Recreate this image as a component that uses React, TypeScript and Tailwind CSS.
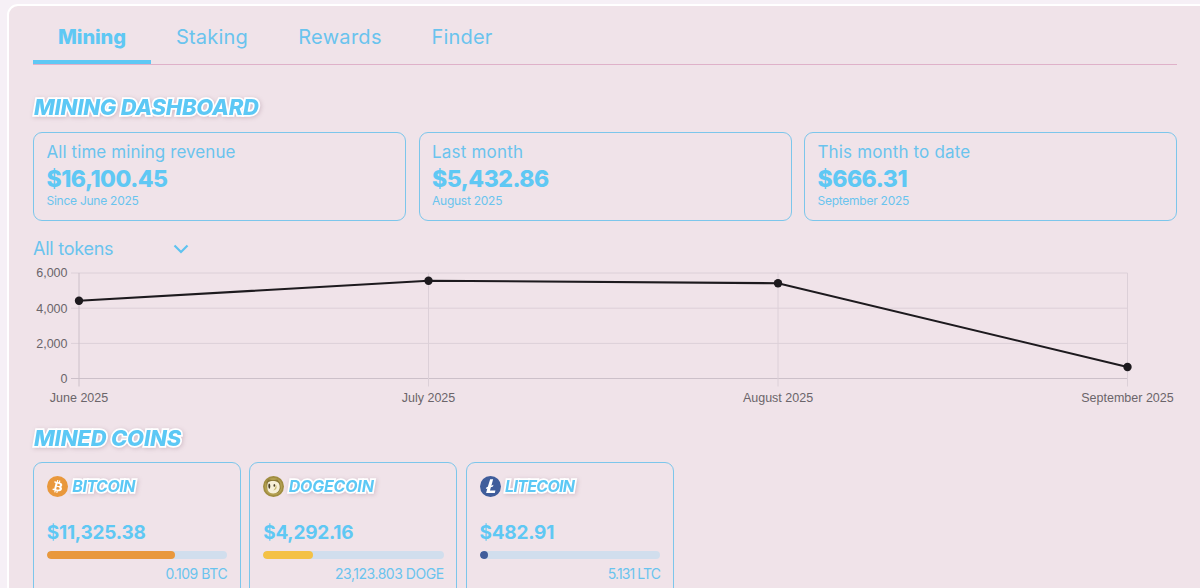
import React from "react";

const TABS = [
  { label: "Mining", active: true, box: "w-[118px]", text: "font-extrabold tracking-[-0.100px]" },
  { label: "Staking", active: false, box: "w-[122px]", text: "tracking-[0.2px]" },
  { label: "Rewards", active: false, box: "w-[134px]", text: "tracking-[0.3px]" },
  { label: "Finder", active: false, box: "w-[110px]", text: "tracking-[0.2px]" },
];

const STATS = [
  { title: "All time mining revenue", value: "$16,100.45", note: "Since June 2025", titleText: "tracking-[0.080px]" },
  { title: "Last month", value: "$5,432.86", note: "August 2025", titleText: "tracking-[0.200px]" },
  { title: "This month to date", value: "$666.31", note: "September 2025", titleText: "tracking-[0.150px]" },
];

const POINTS = [
  { label: "June 2025", x: 79, y: 300.8 },
  { label: "July 2025", x: 428.5, y: 280.7 },
  { label: "August 2025", x: 778, y: 283.2 },
  { label: "September 2025", x: 1127.5, y: 367 },
];

const GRID = [
  { label: "6,000", y: 273 },
  { label: "4,000", y: 308.2 },
  { label: "2,000", y: 343.4 },
  { label: "0", y: 378.5 },
];

function BitcoinIcon() {
  return (
    <svg viewBox="0 0 32 32" className="size-[21px]">
      <circle cx="16" cy="16" r="16" fill="#e9983c" />
      <path
        fill="#fff"
        d="M23.189 14.02c.314-2.096-1.283-3.223-3.465-3.975l.708-2.84-1.728-.43-.69 2.765c-.454-.114-.92-.22-1.385-.326l.695-2.783L15.596 6l-.708 2.839c-.376-.086-.746-.17-1.104-.26l.002-.009-2.384-.595-.46 1.846s1.283.294 1.256.312c.7.175.826.638.805 1.006l-.806 3.235c.048.012.11.03.18.057l-.183-.045-1.13 4.532c-.086.212-.303.531-.793.41.018.025-1.256-.313-1.256-.313l-.858 1.978 2.25.561c.418.105.828.215 1.231.318l-.715 2.872 1.727.43.708-2.84c.472.127.93.245 1.378.357l-.706 2.828 1.728.43.715-2.866c2.948.558 5.164.333 6.097-2.333.752-2.146-.037-3.385-1.588-4.192 1.13-.26 1.98-1.003 2.207-2.538zm-3.95 5.538c-.533 2.147-4.148.986-5.32.695l.95-3.805c1.172.293 4.929.872 4.37 3.11zm.535-5.569c-.487 1.953-3.495.96-4.47.717l.86-3.45c.975.243 4.118.696 3.61 2.733z"
      />
    </svg>
  );
}

function DogecoinIcon() {
  return (
    <svg viewBox="0 0 32 32" className="size-[21px]">
      <circle cx="16" cy="16" r="16" fill="#a08d40" />
      <circle cx="16" cy="16" r="13.500" fill="#b3a050" />
      <path fill="#8b7a38" d="M5 9 8 5l7 1.500 7-1 4 5 1 9-4 6H10l-4-7z" />
      <path fill="#f6f0d8" d="M8 9.500c3-2 7-2.300 11-1.500 4.500.8 6.700 4.500 6.500 9-.2 5.500-4 9.500-10 9.500S6.500 22.500 6.500 17c0-3 .2-5.500 1.500-7.500z" />
      <path fill="#4a4028" d="M9.300 11.500c2.200 0 2.600 7.500.4 8-1.900-.5-2.200-7.500-.4-8zM17.200 12c2 .6 1.900 4 0 4.500-1.600-.5-1.700-3.900 0-4.500z" />
      <path fill="#c8b86e" d="M18 18.500c1.500-1.500 1.500-4 .8-5.500 2 1.500 2.500 4 1.500 6-.8 1.700-2.500 2.700-5 2.700 1.400-.8 2.200-1.600 2.700-3.200z" />
    </svg>
  );
}

function LitecoinIcon() {
  return (
    <svg viewBox="0 0 32 32" className="size-[21px]">
      <circle cx="16" cy="16" r="16" fill="#3f5d9b" />
      <path
        fill="#fff"
        d="m15.500 5h4.500l-2.700 9.800 3.200-1.300-.7 2.400-3.200 1.300-1.400 5h8.300l-1 3.800H9.300l1.900-7.100-2.300.9.7-2.400 2.300-.9z"
      />
    </svg>
  );
}

const COINS = [
  { name: "BITCOIN", Icon: BitcoinIcon, value: "$11,325.38", amount: "0.109 BTC", fill: "bg-[#e9983c]", percent: 71.2, nameText: "tracking-[-0.500px]", amountText: "tracking-[-0.450px]" },
  { name: "DOGECOIN", Icon: DogecoinIcon, value: "$4,292.16", amount: "23,123.803 DOGE", fill: "bg-[#f4c145]", percent: 27.6, nameText: "tracking-[-0.200px]", amountText: "tracking-[-0.480px]" },
  { name: "LITECOIN", Icon: LitecoinIcon, value: "$482.91", amount: "5.131 LTC", fill: "bg-[#3f5d9b]", percent: 4.4, nameText: "tracking-[-0.700px]", amountText: "tracking-[-0.900px]" },
];

const OUTLINED =
  "italic text-[#5cc8f5] [paint-order:stroke_fill] [-webkit-text-stroke:3.500px_white] [filter:drop-shadow(1px_1px_2px_rgba(90,40,70,0.2))]";

function RevenueChart() {
  return (
    <svg viewBox="25 264 1160 146" className="-ml-2 block h-[146px] w-[1160px] shrink-0 font-['Liberation_Sans',sans-serif] text-[12.500px]">
      {GRID.map((g, i) => (
        <g key={g.label}>
          <line x1="71" x2="1127.5" y1={g.y} y2={g.y} stroke={i === 3 ? "#ccc0c9" : "#dcd0d8"} />
          <text x="67.500" y={g.y + 4.300} textAnchor="end" fill="#6b656a">{g.label}</text>
        </g>
      ))}
      {POINTS.map((p, i) => (
        <g key={p.label}>
          <line x1={p.x} x2={p.x} y1="273" y2="386.500" stroke={i === 0 ? "#ccc0c9" : "#dcd0d8"} />
          <text x={p.x} y="401.500" textAnchor="middle" fill="#6b656a">{p.label}</text>
        </g>
      ))}
      <polyline points={POINTS.map((p) => `${p.x},${p.y}`).join(" ")} fill="none" stroke="#1d1a1e" strokeWidth="2.100" />
      {POINTS.map((p) => (
        <circle key={p.label} cx={p.x} cy={p.y} r="4.200" fill="#1d1a1e" />
      ))}
    </svg>
  );
}

export default function App() {
  return (
    <div className="h-[588px] w-full overflow-hidden bg-[#f6f0f6] pt-1 pl-[7px] font-['Inter',sans-serif] text-[#6ac3ee]">
      <main className="h-[620px] w-[1220px] rounded-[11px] border-2 border-white bg-[#f0e3e9] pl-6">
        <div className="flex w-[1144px] flex-col">
          <nav className="flex h-[59px] border-b border-[#dfb1c9]">
            {TABS.map((t) => (
              <button
                key={t.label}
                className={`h-[58px] shrink-0 pt-2 text-[20px] leading-none ${t.box} ${t.active ? "border-b-4 border-[#5fc8f4] text-[#5fc8f4]" : "border-b-4 border-transparent"}`}
              >
                <span className={t.text}>{t.label}</span>
              </button>
            ))}
          </nav>

          <h2 className={`mt-[27px] h-[40px] pl-px text-[22px] leading-[30px] font-extrabold tracking-[-0.250px] whitespace-nowrap ${OUTLINED}`}>MINING DASHBOARD</h2>

          <section className="grid grid-cols-3 gap-[12.500px]">
            {STATS.map((s) => (
              <div key={s.title} className="flex h-[89px] flex-col rounded-[9px] border border-[#7cc6eb] pt-2 pl-[12.500px]">
                <span className={`h-[25px] text-[17px] leading-[23px] ${s.titleText}`}>{s.title}</span>
                <span className="h-[26px] text-[23px] leading-[26px] font-extrabold tracking-[-0.500px] text-[#5fc8f4]">{s.value}</span>
                <span className="text-[12px] leading-[18px] tracking-[-0.250px]">{s.note}</span>
              </div>
            ))}
          </section>

          <button className="mt-[15px] flex h-[24px] w-[156px] items-center justify-between text-left text-[18px]">
            <span className="tracking-[-0.250px]">All tokens</span>
            <svg viewBox="0 0 16 10" className="mt-0.5 h-[10px] w-4" fill="none" stroke="#5fc3f0" strokeWidth="2.200">
              <path d="m1.500 1.500 6.500 6.500 6.500-6.500" />
            </svg>
          </button>

          <div className="mt-1"><RevenueChart /></div>

          <h2 className={`mt-[13px] h-[39px] pl-px text-[22px] leading-[30px] font-extrabold tracking-[-0.200px] whitespace-nowrap ${OUTLINED}`}>MINED COINS</h2>

          <section className="flex gap-[8.400px]">
            {COINS.map(({ name, Icon, value, amount, fill, percent, nameText, amountText }) => (
              <div key={name} className="flex h-[140px] w-[208px] shrink-0 flex-col rounded-[9px] border border-[#7cc6eb] px-[12.800px] pt-[13px]">
                <div className="flex h-[21px] items-center gap-[4.500px]">
                  <Icon />
                  <h3 className={`text-[16px] leading-[21px] font-bold ${nameText} ${OUTLINED}`}>{name}</h3>
                </div>
                <div className="mt-[23px] text-[19px] leading-[26px] font-bold tracking-[-0.250px] text-[#5fc8f4]">{value}</div>
                <div className="mt-[5px] h-2 overflow-hidden rounded-full bg-[#d1deed]">
                  <div className={`h-full rounded-full ${fill}`} style={{ width: `${percent}%` }} />
                </div>
                <div className={`mt-[5px] text-right text-[14px] leading-[19px] ${amountText}`}>{amount}</div>
              </div>
            ))}
          </section>
        </div>
      </main>
    </div>
  );
}
